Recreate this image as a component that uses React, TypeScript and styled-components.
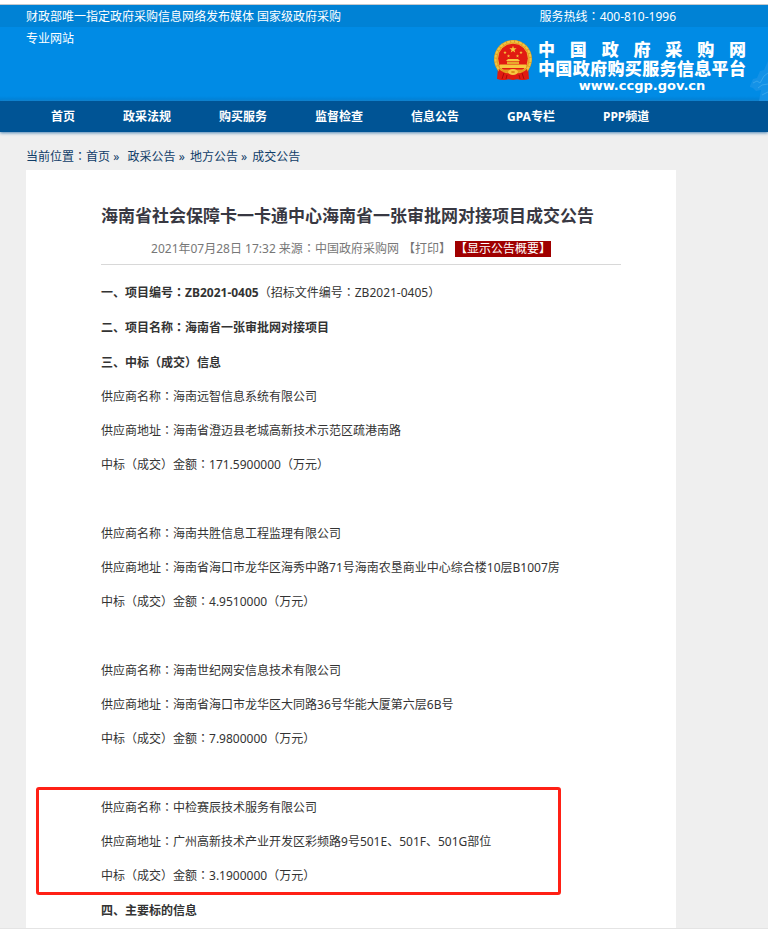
import React, { Fragment } from "react";
import styled, { createGlobalStyle } from "styled-components";

const GlobalStyle = createGlobalStyle`
  * { box-sizing: border-box; }
  body {
    margin: 0;
    background: #fff;
    color: #333;
    font-family: "Noto Sans", "Noto Sans CJK SC", sans-serif;
    font-size: 12px;
    line-height: 22px;
  }
  a { color: inherit; text-decoration: none; }
  h1, h2, p { margin: 0; font-size: 12px; }
`;

const Page = styled.div`
  margin-top: 4px;
  border-top: 1px solid #c4c8cc;
  border-bottom: 1px solid #e4e4e4;
  background: #efefef;
`;

const Header = styled.header`
  position: relative;
  display: grid;
  grid-template-columns: 325px 1fr;
  grid-template-rows: 22px 74px;
  padding: 0 22px 0 26px;
  overflow: hidden;
  color: #fff;
  background: linear-gradient(#0082d5 22px, #008be5 22px, #008be5 91px, #007fd2 96px);
`;

const Slogan = styled.p`
  grid-row: 1 / 3;
  padding-top: 1px;
`;

const Hotline = styled.p`
  justify-self: end;
  margin-right: 70px;
  padding-top: 1px;
`;

const Brand = styled.a`
  display: flex;
  justify-self: end;
  align-items: flex-start;
  gap: 5px;
  padding-top: 13px;
`;

const BrandText = styled.span`
  display: flex;
  flex-direction: column;
  width: 208px;
  padding-top: 1px;
  font-family: "Liberation Sans", "Noto Sans CJK SC", sans-serif;
  font-size: 17px;
  font-weight: 900;
  line-height: 19px;
`;

const Spread = styled.span`
  display: flex;
  justify-content: space-between;
`;

const BrandUrl = styled.span`
  align-self: center;
  font-family: "DejaVu Sans", sans-serif;
  font-size: 13px;
  font-weight: 700;
  line-height: 13px;
`;

const Landscape = styled.svg`
  position: absolute;
  right: 0;
  bottom: 0;
`;

const Nav = styled.nav`
  display: flex;
  position: relative;
  padding-left: 27px;
  background: #005495;
  box-shadow: 0 1px 3px #4d86b5;
`;

const NavLink = styled.a`
  padding: 0 24px;
  color: #fff;
  font-weight: 700;
  line-height: 31px;
`;

const Main = styled.main`
  padding: 14px 92px 0 26px;
`;

const Crumbs = styled.nav`
  color: #103d68;
  padding-bottom: 2px;
`;

const Separator = styled.span`
  margin-right: 2px;
`;

const Card = styled.article`
  padding: 32px 55px 0 75px;
  background: #fff;
`;

const Title = styled.h1`
  color: #383842;
  font-size: 17px;
  line-height: 28px;
  white-space: nowrap;
`;

const Meta = styled.div`
  display: flex;
  justify-content: center;
  align-items: center;
  gap: 4px;
  height: 35px;
  padding: 3px 20px 0 0;
  border-bottom: 1px solid #d8d8d8;
  color: #777;
  white-space: nowrap;
`;

const PlainButton = styled.button`
  padding: 0;
  border: 0;
  background: none;
  color: inherit;
  font: inherit;
  line-height: 16px;
`;

const SummaryButton = styled(PlainButton)`
  background: #a00000;
  color: #fff;
`;

const Details = styled.div`
  padding-top: 10px;
`;

const SectionHead = styled.h2`
  line-height: 35px;
`;

const Light = styled.span`
  font-weight: 400;
`;

const Supplier = styled.section<{ $marked?: boolean }>`
  position: relative;
  margin-bottom: ${(p) => (p.$marked ? 0 : 35)}px;
  line-height: 34px;
  ${(p) =>
    p.$marked &&
    `&::after {
      content: "";
      position: absolute;
      inset: -4px 60px -2px -65px;
      border: 3px solid #ff2015;
      border-radius: 3px;
      pointer-events: none;
    }`}
`;

const Centered = styled.span`
  font-family: "Noto Sans CJK TC", sans-serif;
  line-height: 1;
`;

/* Full-width colons sit in the middle of their em box. */
function Label({ children }: { children: string }) {
  return (
    <>
      {children.split(/(：)/).map((part, i) =>
        i % 2 ? <Centered key={i}>{part}</Centered> : <Fragment key={i}>{part}</Fragment>
      )}
    </>
  );
}

const star = (cx: number, cy: number, r: number) =>
  Array.from({ length: 10 }, (_, i) => {
    const a = (Math.PI * i) / 5 - Math.PI / 2;
    const d = i % 2 ? r * 0.4 : r;
    return `${(cx + d * Math.cos(a)).toFixed(2)},${(cy + d * Math.sin(a)).toFixed(2)}`;
  }).join(" ");

function Emblem() {
  return (
    <svg width="40" height="41" viewBox="0 0 40 41" aria-hidden="true">
      <path d="M5 27 4 39l6 1 4-1 6 1 6-1 4 1 6-1-1-12Z" fill="#d9200f" />
      <circle cx="20" cy="19" r="19" fill="#e0a020" />
      <circle cx="20" cy="19" r="17.5" fill="none" stroke="#f0c445" strokeWidth="2" strokeDasharray="3 1" />
      <circle cx="20" cy="18.5" r="15.3" fill="#e11b12" stroke="#f4c63c" strokeWidth="0.8" />
      <g fill="#f7c93e">
        <polygon points={star(20, 9.5, 3.8)} />
        <polygon points={star(12, 12.5, 1.8)} />
        <polygon points={star(28, 12.5, 1.8)} />
        <polygon points={star(15.5, 16, 1.7)} />
        <polygon points={star(24.5, 16, 1.7)} />
        <path d="m13 21 2-2h10l2 2Z" />
        <path d="M14 21.500h12V24H14Z" fill="#e9a92c" />
        <path d="M7 24.500h26V28H7Z" />
        <path d="M8 29.500h24l-3 3H11Z" fill="#e39a1d" />
      </g>
      <path d="M6 29q5 5 10 4l4-3 4 3q5 1 10-4l1 10q-6 2-11 0l-4-1-4 1q-5 2-11 0Z" fill="#e11b12" />
      <ellipse cx="20" cy="32" rx="5" ry="3" fill="#f6c940" />
      <ellipse cx="20" cy="32" rx="2" ry="1" fill="#d98c17" />
      <path d="m11 33-2 6m20-6 2 6M14 35l-1 4m13-4 1 4" stroke="#a80c08" />
    </svg>
  );
}

const navItems = ["首页", "政采法规", "购买服务", "监督检查", "信息公告", "GPA专栏", "PPP频道"];

const suppliers = [
  { name: "海南远智信息系统有限公司", address: "海南省澄迈县老城高新技术示范区疏港南路", amount: "171.5900000" },
  { name: "海南共胜信息工程监理有限公司", address: "海南省海口市龙华区海秀中路71号海南农垦商业中心综合楼10层B1007房", amount: "4.9510000" },
  { name: "海南世纪网安信息技术有限公司", address: "海南省海口市龙华区大同路36号华能大厦第六层6B号", amount: "7.9800000" },
  { name: "中检赛辰技术服务有限公司", address: "广州高新技术产业开发区彩频路9号501E、501F、501G部位", amount: "3.1900000", marked: true },
];

export default function App() {
  return (
    <>
      <GlobalStyle />
      <Page>
        <Header>
          <Slogan>财政部唯一指定政府采购信息网络发布媒体 国家级政府采购专业网站</Slogan>
          <Hotline><Label>服务热线：400-810-1996</Label></Hotline>
          <Brand href="#">
            <Emblem />
            <BrandText>
              <Spread>{[..."中国政府采购网"].map((c) => <span key={c}>{c}</span>)}</Spread>
              <Spread>{[..."中国政府购买服务信息平台"].map((c) => <span key={c}>{c}</span>)}</Spread>
              <BrandUrl>www.ccgp.gov.cn</BrandUrl>
            </BrandText>
          </Brand>
          <Landscape width="18" height="42" viewBox="0 0 18 42" aria-hidden="true">
            <path d="M0 27 3 20l4-1 3-7 4-1 4-9v40H9l2-11-5 1-3-3-3-1Z" fill="#1492e7" />
            <path d="m3 24 4-2 3 2 4-7 4-3M8 29l4-3 6-1M12 36l6-3" fill="none" stroke="#36a5ec" />
          </Landscape>
        </Header>
        <Nav>
          {navItems.map((item) => <NavLink key={item} href="#">{item}</NavLink>)}
        </Nav>
        <Main>
          <Crumbs>
            <Label>当前位置：</Label><a href="#">首页</a> <Separator>»&nbsp;</Separator> <a href="#">政采公告</a> <Separator>»</Separator> <a href="#">地方公告</a> <Separator>»</Separator> <a href="#">成交公告</a>
          </Crumbs>
          <Card>
            <Title>海南省社会保障卡一卡通中心海南省一张审批网对接项目成交公告</Title>
            <Meta>
              <span><Label>2021年07月28日 17:32 来源：中国政府采购网</Label></span>
              <PlainButton>【打印】</PlainButton>
              <SummaryButton>【显示公告概要】</SummaryButton>
            </Meta>
            <Details>
              <SectionHead>
                <Label>一、项目编号：ZB2021-0405</Label>
                <Light><Label>（招标文件编号：ZB2021-0405）</Label></Light>
              </SectionHead>
              <SectionHead><Label>二、项目名称：海南省一张审批网对接项目</Label></SectionHead>
              <SectionHead>三、中标（成交）信息</SectionHead>
              {suppliers.map((s) => (
                <Supplier key={s.name} $marked={s.marked}>
                  <p><Label>{`供应商名称：${s.name}`}</Label></p>
                  <p><Label>{`供应商地址：${s.address}`}</Label></p>
                  <p><Label>{`中标（成交）金额：${s.amount}（万元）`}</Label></p>
                </Supplier>
              ))}
              <SectionHead>四、主要标的信息</SectionHead>
            </Details>
          </Card>
        </Main>
      </Page>
    </>
  );
}
